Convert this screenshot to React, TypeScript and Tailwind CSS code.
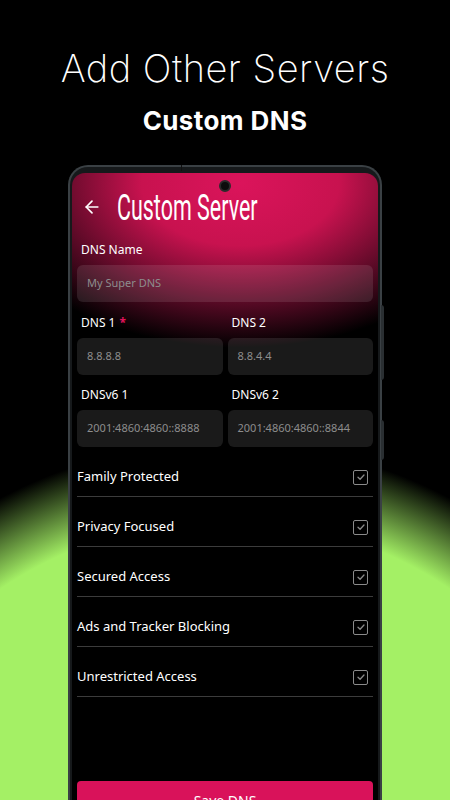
import { ArrowLeft } from 'lucide-react';

const ipRows = [
  [
    { label: 'DNS 1', required: true, placeholder: '8.8.8.8' },
    { label: 'DNS 2', required: false, placeholder: '8.8.4.4' },
  ],
  [
    { label: 'DNSv6 1', required: false, placeholder: '2001:4860:4860::8888' },
    { label: 'DNSv6 2', required: false, placeholder: '2001:4860:4860::8844' },
  ],
];

const options = ['Family Protected', 'Privacy Focused', 'Secured Access', 'Ads and Tracker Blocking', 'Unrestricted Access'];

function CheckBox() {
  return (
    <div className="w-[15px] h-[15px] rounded-[2px] border-[1.5px] border-[#8a8a8a] flex items-center justify-center">
      <svg width="10" height="10" viewBox="0 0 10 10" fill="none">
        <path d="M2 5.2 L4.1 7.2 L8 3" stroke="#8a8a8a" strokeWidth="1.3" strokeLinecap="round" strokeLinejoin="round" />
      </svg>
    </div>
  );
}

export default function App() {
  return (
    <div className="w-[450px] h-[800px] overflow-hidden bg-black bg-[radial-gradient(circle_at_50%_920px,#a4f065_0px,#a4f065_400px,#000000_478px)] font-['Noto_Sans',sans-serif]">
      {/* Headline */}
      <div className="pt-[44px] text-center text-white">
        <h1 className="text-[38px] leading-[48px] font-extralight tracking-[0.5px] font-['Inter',sans-serif]">Add Other Servers</h1>
        <h2 className="mt-[12px] text-[26px] leading-[34px] font-bold tracking-[0.4px] font-['Inter',sans-serif]">Custom DNS</h2>
      </div>

      {/* Phone */}
      <div className="relative ml-[68px] mt-[27px] w-[314px]">
        <div className="absolute left-[113px] top-0 w-[1px] h-[6px] bg-[#111]" />
        <div className="absolute -right-[2px] top-[140px] w-[3px] h-[75px] bg-[#2a2f32] rounded-r-sm" />
        <div className="absolute -right-[2px] top-[255px] w-[3px] h-[40px] bg-[#2a2f32] rounded-r-sm" />
        <div className="bg-[#3a4044] rounded-t-[20px] p-[2px] pb-0">
          <div className="bg-[#16191b] rounded-t-[18px] pt-[6px] px-[2px]">
            <div className="relative h-[640px] rounded-t-[13px] bg-black bg-[radial-gradient(ellipse_260px_165px_at_55%_10px,#db145b_0%,#c8124f_38%,#5a0a26_72%,#000000_100%)] px-[5px] pt-[16px]">
              {/* camera */}
              <div className="absolute left-[147px] top-[7px] w-[12px] h-[12px] rounded-full bg-[#0c0c0c] border-[2px] border-[#2a2a2a]" />

              {/* header */}
              <div className="flex items-center h-[36px] pl-[5px]">
                <ArrowLeft size={20} color="#ffffff" strokeWidth={2} />
                <span className="ml-[15px] inline-block origin-left scale-x-[0.58] text-white text-[37px] leading-none font-['Roboto',sans-serif] whitespace-nowrap">
                  Custom Server
                </span>
              </div>

              {/* DNS name */}
              <div className="mt-[17px] pl-[4px] text-[12px] leading-[16px] text-white">DNS Name</div>
              <div className="mt-[7px] h-[37px] rounded-[6px] bg-white/10 flex items-center px-[10px] text-[11px] text-[#8d8d8d]">
                My Super DNS
              </div>

              {ipRows.map((row, i) => (
                <div key={i} className={`grid grid-cols-2 gap-[5px] ${i === 0 ? 'mt-[13px]' : 'mt-[12px]'}`}>
                  {row.map(field => (
                    <div key={field.label}>
                      <div className="pl-[4px] text-[12px] leading-[16px] text-white">
                        {field.label}
                        {field.required && <span className="ml-[4px] text-[#e0145c] font-bold">*</span>}
                      </div>
                      <div className="mt-[7px] h-[37px] rounded-[6px] bg-white/10 flex items-center px-[10px] text-[11px] text-[#8d8d8d] whitespace-nowrap">
                        {field.placeholder}
                      </div>
                    </div>
                  ))}
                </div>
              ))}

              {/* toggles */}
              <div>
                {options.map(opt => (
                  <div key={opt} className="flex items-center justify-between h-[50px] pt-[11px] border-b border-[#3c3c3c] pr-[5px]">
                    <span className="text-[13px] text-white">{opt}</span>
                    <CheckBox />
                  </div>
                ))}
              </div>

              <button className="mt-[84px] w-full h-[40px] rounded-t-[4px] bg-[#d9125a] text-white text-[14px] flex items-start justify-center pt-[9px]">
                Save DNS
              </button>
            </div>
          </div>
        </div>
      </div>
    </div>
  );
}
